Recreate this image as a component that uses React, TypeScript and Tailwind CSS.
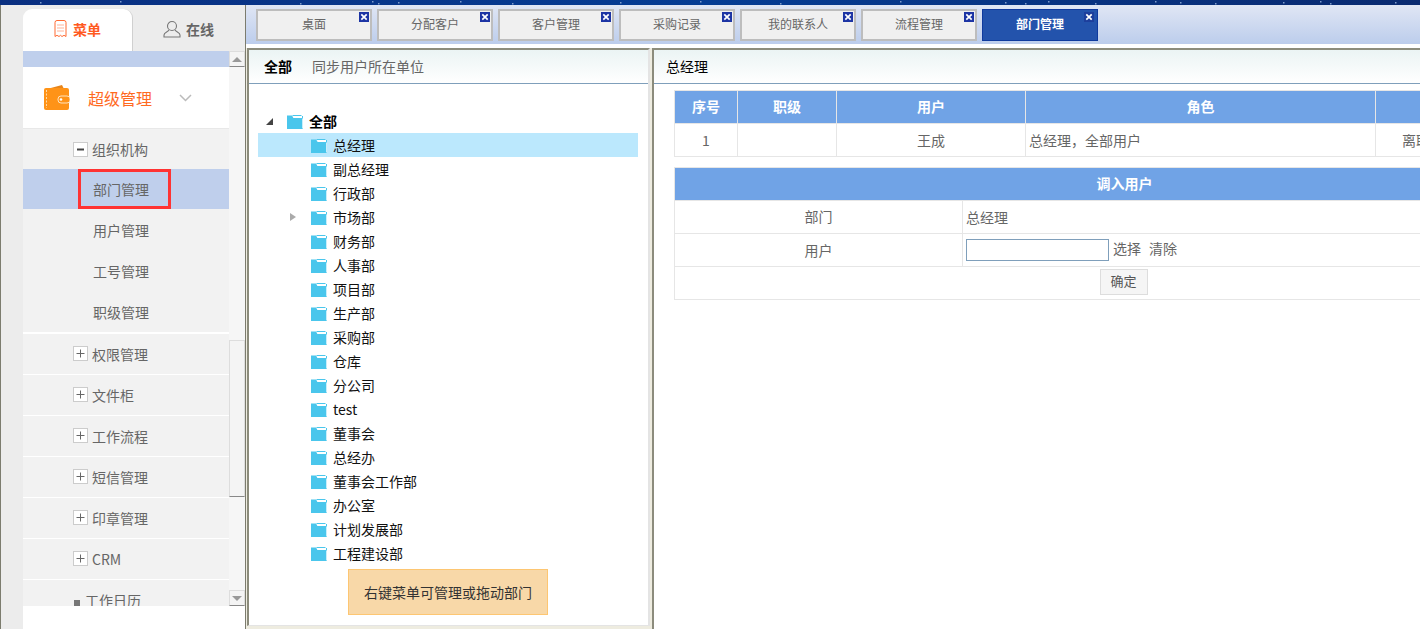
import React from "react";

const tabs = ["桌面", "分配客户", "客户管理", "采购记录", "我的联系人", "流程管理", "部门管理"];
const depts = ["总经理", "副总经理", "行政部", "市场部", "财务部", "人事部", "项目部", "生产部", "采购部", "仓库", "分公司", "test", "董事会", "总经办", "董事会工作部", "办公室", "计划发展部", "工程建设部"];
const stars = [[40,2],[120,1],[300,3],[372,1],[378,3],[398,2],[460,1],[512,3],[620,2],[700,1],[780,3],[900,1],[1005,2],[1025,3],[1048,1],[1095,3],[1155,1],[1180,2],[1215,3],[1283,2],[1320,1],[1330,3],[1395,2]];

function Folder() {
  return (
    <svg width="16" height="14" viewBox="0 0 16 14" className="mt-[1px] block shrink-0">
      <path d="M0 0.5h5l1.500 2.500H16v11H0z" fill="#4ac6ec" />
      <path d="M5.500 0.500h9l1 1.500v1H7z" fill="#ffffff" />
      <path d="M5.500 0.500h9" stroke="#4ac6ec" strokeWidth="1" />
      <path d="M15.500 1v2" stroke="#4ac6ec" strokeWidth="1" />
      <path d="M15.500 3.500v10" stroke="#c9eefa" strokeWidth="1" />
    </svg>
  );
}

function Tab({ label, active }: { label: string; active?: boolean }) {
  return (
    <div className={`relative flex h-8 w-[116px] shrink-0 items-center justify-center pb-[2px] text-[12px] ${active ? "border border-[#0f3a9e] bg-[#2353ac] font-semibold text-white" : "border-2 border-[#bdbdbd] bg-[#f0f0f0] text-[#666666]"}`}>
      {label}
      <span className={`absolute flex h-[10px] w-[10px] items-center justify-center ${active ? "top-[2px] right-[3px] bg-[#1d3f9c]" : "top-[1px] right-[1px] bg-[#1c34a4]"}`}>
        <svg width="8" height="8" viewBox="0 0 8 8"><path d="M1.3 1.3l5.4 5.4M6.7 1.3L1.3 6.7" stroke="#ffffff" strokeWidth="1.7" /></svg>
      </span>
    </div>
  );
}

function PlusBox({ minus }: { minus?: boolean }) {
  return (
    <span className="mr-[4px] flex h-[15px] w-[15px] shrink-0 items-center justify-center border border-[#cccccc] bg-white">
      <svg width="11" height="11" viewBox="0 0 11 11">
        <path d={minus ? "M2 5.5h7" : "M1.5 5.5h8M5.5 1.5v8"} stroke={minus ? "#444444" : "#666666"} strokeWidth={minus ? 2 : 1} />
      </svg>
    </span>
  );
}

function SideGroup({ label }: { label: string }) {
  return (
    <div className="flex h-[41px] shrink-0 items-center border-b border-white bg-[#f2f2f2] pl-[50px] text-[14px] text-[#666666]">
      <span className="-mt-[2px]"><PlusBox /></span>
      <span>{label}</span>
    </div>
  );
}

function SubItem({ label }: { label: string }) {
  return <div className="flex h-[41px] shrink-0 items-center bg-[#f2f2f2] pt-[1px] pl-[70px] text-[14px] text-[#666666]">{label}</div>;
}

function Sidebar() {
  return (
    <aside className="flex h-full w-[246px] shrink-0 flex-col border-r border-l border-[#7c7c6e] bg-[#ececec] pt-[4px] pl-[22px]">
      <div className="flex h-[42px] shrink-0">
        <div className="flex w-[110px] items-center justify-center gap-[6px] rounded-t-[9px] border-r border-[#d0d0d0] bg-white pb-[2px] text-[14px] font-bold text-[#ff5a1f]">
          <svg width="13" height="18" viewBox="0 0 13 18" fill="none" stroke="#ff6a33" strokeWidth="1">
            <path d="M1 2.5q0-2 2-2h7q2 0 2 2v14l-2-1.2-2 1.2-1.500-1.200-1.500 1.200-2-1.200-2 1.200z" />
            <path d="M3 5h7M3 8h7M3 11h7" stroke="#ffb399" />
          </svg>
          菜单
        </div>
        <div className="flex w-[111px] items-center justify-center gap-[5px] pb-[2px] text-[14px] font-semibold text-[#666666]">
          <svg width="18" height="18" viewBox="0 0 18 18" fill="none" stroke="#777777" strokeWidth="1.100">
            <circle cx="9" cy="6" r="4.500" />
            <path d="M6 10c-1 2-5 2.500-5 5v2h16v-2c0-2.500-4-3-5-5" />
          </svg>
          在线
        </div>
      </div>
      <div className="flex h-[555px] shrink-0 overflow-hidden">
        <div className="flex w-[206px] shrink-0 flex-col overflow-hidden bg-[#f2f2f2]">
          <div className="h-[16px] shrink-0 bg-[#bfcfec]" />
          <div className="flex h-[62px] shrink-0 items-center border-t border-b border-t-white border-b-[#e8e8e8] bg-white pl-[21px]">
            <svg width="26" height="26" viewBox="0 0 26 26" className="-mt-[3px] shrink-0">
              <path d="M3 5l15-4 2 4z" fill="#e8851a" />
              <rect x="0" y="4" width="25" height="22" rx="2" fill="#ff9317" />
              <path d="M2.500 6v18" stroke="#ffd9a6" strokeWidth="1" strokeDasharray="2 1.500" />
              <rect x="14" y="12" width="12" height="7" rx="3" fill="#ff9317" stroke="#ffe2bb" strokeWidth="1" />
              <circle cx="17" cy="15.500" r="1.300" fill="#ffffff" />
            </svg>
            <span className="ml-[18px] text-[16px] text-[#ff6a1f]">超级管理</span>
            <svg width="13" height="8" viewBox="0 0 13 8" fill="none" stroke="#bbbbbb" strokeWidth="1.500" className="ml-[27px]"><path d="M1 1l5.500 5.500L12 1" /></svg>
          </div>
          <div className="flex h-[40px] shrink-0 items-center pt-[1px] pl-[50px] text-[14px] text-[#666666]">
            <PlusBox minus />
            <span>组织机构</span>
          </div>
          <div className="relative flex h-[40px] shrink-0 items-center bg-[#bfcfec] pt-[1px] pl-[70px] text-[14px] text-[#666666]">
            部门管理
            <span className="absolute top-0 left-[55px] h-[40px] w-[93px] border-[3px] border-[#ff3333]" />
          </div>
          <div className="flex shrink-0 flex-col border-b-2 border-white bg-[#f2f2f2]">
            <SubItem label="用户管理" />
            <SubItem label="工号管理" />
            <SubItem label="职级管理" />
          </div>
          {["权限管理", "文件柜", "工作流程", "短信管理", "印章管理", "CRM"].map((g) => (
            <SideGroup key={g} label={g} />
          ))}
          <div className="flex h-[41px] shrink-0 items-center pl-[51px] text-[14px] text-[#666666]">
            <span className="mt-[4px] mr-[5px] h-[6px] w-[6px] bg-[#777777]" />
            工作日历
          </div>
        </div>
        <div className="flex w-[16px] shrink-0 flex-col bg-[#f6f6f6]">
          <div className="flex h-[16px] shrink-0 items-center justify-center border border-[#dddddd] border-b-[#888888] bg-[#f4f4f4]">
            <span className="h-0 w-0 border-x-[5px] border-b-[5px] border-x-transparent border-b-[#999999]" />
          </div>
          <div className="mt-[273px] h-[157px] shrink-0 border border-[#dddddd] border-b-[#888888] bg-[#f4f4f4]" />
          <div className="flex-1" />
          <div className="flex h-[16px] shrink-0 items-center justify-center border border-[#dddddd] border-b-[#888888] bg-[#f4f4f4]">
            <span className="h-0 w-0 border-x-[5px] border-t-[5px] border-x-transparent border-t-[#999999]" />
          </div>
        </div>
      </div>
      <div className="flex-1 bg-white" />
    </aside>
  );
}

function PanelHeader({ children }: { children: React.ReactNode }) {
  return (
    <div className="flex h-[34px] shrink-0 items-center border-b border-[#7f9fbb] bg-gradient-to-b from-[#ebf4f4] to-white pl-[15px] text-[14px]">
      {children}
    </div>
  );
}

function TreePanel() {
  return (
    <section className="ml-px flex h-[578px] w-[403px] shrink-0 flex-col border-t-2 border-r-2 border-b border-l-2 border-t-[#8c8c7c] border-r-[#e4e4e4] border-b-[#e4e4e4] border-l-[#8c8c7c] bg-white">
      <PanelHeader>
        <span className="font-bold text-black">全部</span>
        <span className="ml-[20px] text-[#666666]">同步用户所在单位</span>
      </PanelHeader>
      <div className="flex flex-col pt-[25px] text-[14px] text-[#111111]">
        <div className="ml-[9px] flex h-6 items-center pl-[8px] font-bold text-black">
          <span className="h-0 w-0 border-b-[7px] border-l-[7px] border-b-[#444444] border-l-transparent" />
          <span className="ml-[14px]"><Folder /></span>
          <span className="ml-[6px]">全部</span>
        </div>
        {depts.map((d, i) => (
          <div key={d} className={`mr-[10px] ml-[9px] flex h-6 items-center pl-[32px] ${i === 0 ? "bg-[#bbe8fd]" : ""}`}>
            <span className="w-[7px]">
              {d === "市场部" && <span className="block h-0 w-0 border-y-[4.500px] border-l-[6px] border-y-transparent border-l-[#aaaaaa]" />}
            </span>
            <span className="ml-[14px]"><Folder /></span>
            <span className="ml-[6px]">{d}</span>
          </div>
        ))}
        <div className="mt-[4px] ml-[99px] flex h-[46px] w-[200px] items-center justify-center border border-[#fdc672] bg-[#f8d8a8] text-[14px] text-[#333333]">
          右键菜单可管理或拖动部门
        </div>
      </div>
    </section>
  );
}

const th = "border border-[#e6e6e6] bg-[#70a3e6] pb-[2px] text-center text-[14px] font-bold text-white";
const td = "border border-[#e6e6e6] text-[14px] text-[#666666]";

function RightPanel() {
  return (
    <section className="ml-[2px] flex min-w-0 flex-1 flex-col overflow-hidden border-t-2 border-l-2 border-[#8c8c7c] bg-white">
      <PanelHeader>
        <span className="-ml-[3px] text-black">总经理</span>
      </PanelHeader>
      <div className="w-[920px] pt-[6px] pl-[20px]">
        <table className="w-[900px] table-fixed border-collapse">
          <colgroup>
            <col className="w-[63px]" />
            <col className="w-[99px]" />
            <col className="w-[189px]" />
            <col className="w-[350px]" />
            <col className="w-[199px]" />
          </colgroup>
          <tbody>
            <tr className="h-[33px]">
              <th className={th}>序号</th>
              <th className={th}>职级</th>
              <th className={th}>用户</th>
              <th className={th}>角色</th>
              <th className={th}></th>
            </tr>
            <tr className="h-[33px]">
              <td className={`${td} text-center`}>1</td>
              <td className={td}></td>
              <td className={`${td} text-center`}>王成</td>
              <td className={`${td} pl-[3px]`}>总经理，全部用户</td>
              <td className={`${td} pl-[26px]`}>离职</td>
            </tr>
          </tbody>
        </table>
        <table className="mt-[10px] w-[900px] table-fixed border-collapse">
          <colgroup>
            <col className="w-[288px]" />
            <col className="w-[612px]" />
          </colgroup>
          <tbody>
            <tr className="h-[33px]">
              <th colSpan={2} className={th}>调入用户</th>
            </tr>
            <tr className="h-[33px]">
              <td className={`${td} pb-[1px] text-center`}>部门</td>
              <td className={`${td} pl-[3px]`}>总经理</td>
            </tr>
            <tr className="h-[33px]">
              <td className={`${td} text-center`}>用户</td>
              <td className={`${td} pl-[3px]`}>
                <div className="flex items-center">
                  <input className="h-[22px] w-[143px] border border-[#7f9fbb] bg-white outline-none" />
                  <span className="ml-[4px] pb-[3px]">选择</span>
                  <span className="ml-[8px] pb-[3px]">清除</span>
                </div>
              </td>
            </tr>
            <tr className="h-[33px]">
              <td colSpan={2} className={`${td} pb-[3px] text-center`}>
                <button className="mr-[2px] h-[26px] w-[48px] border border-[#dddddd] bg-[#f5f5f5] pb-[2px] align-middle text-[13px] text-[#555555]">确定</button>
              </td>
            </tr>
          </tbody>
        </table>
      </div>
    </section>
  );
}

export default function App() {
  return (
    <div className="flex h-[629px] w-[1420px] flex-col overflow-hidden bg-white font-['Noto_Sans_CJK_SC',sans-serif]">
      <div className="h-[5px] shrink-0 bg-gradient-to-r from-[#0a2f80] via-[#043c94] to-[#0a2a70]">
        <svg width="1420" height="5" className="block">
          {stars.map(([x, y]) => <rect key={x} x={x} y={y} width="1.500" height="1.500" fill="#7f9ccc" />)}
        </svg>
      </div>
      <div className="flex min-h-0 flex-1">
        <Sidebar />
        <main className="flex min-w-0 flex-1 flex-col bg-white">
          <div className="flex h-[39px] shrink-0 gap-[5px] bg-gradient-to-b from-[#e0e6f4] to-[#bccdec] pt-[4px] pl-[10px]">
            {tabs.map((t, i) => <Tab key={t} label={t} active={i === tabs.length - 1} />)}
          </div>
          <div className="mt-[4px] flex min-h-0 flex-1 bg-[#eeece0]">
            <TreePanel />
            <RightPanel />
          </div>
        </main>
      </div>
    </div>
  );
}
